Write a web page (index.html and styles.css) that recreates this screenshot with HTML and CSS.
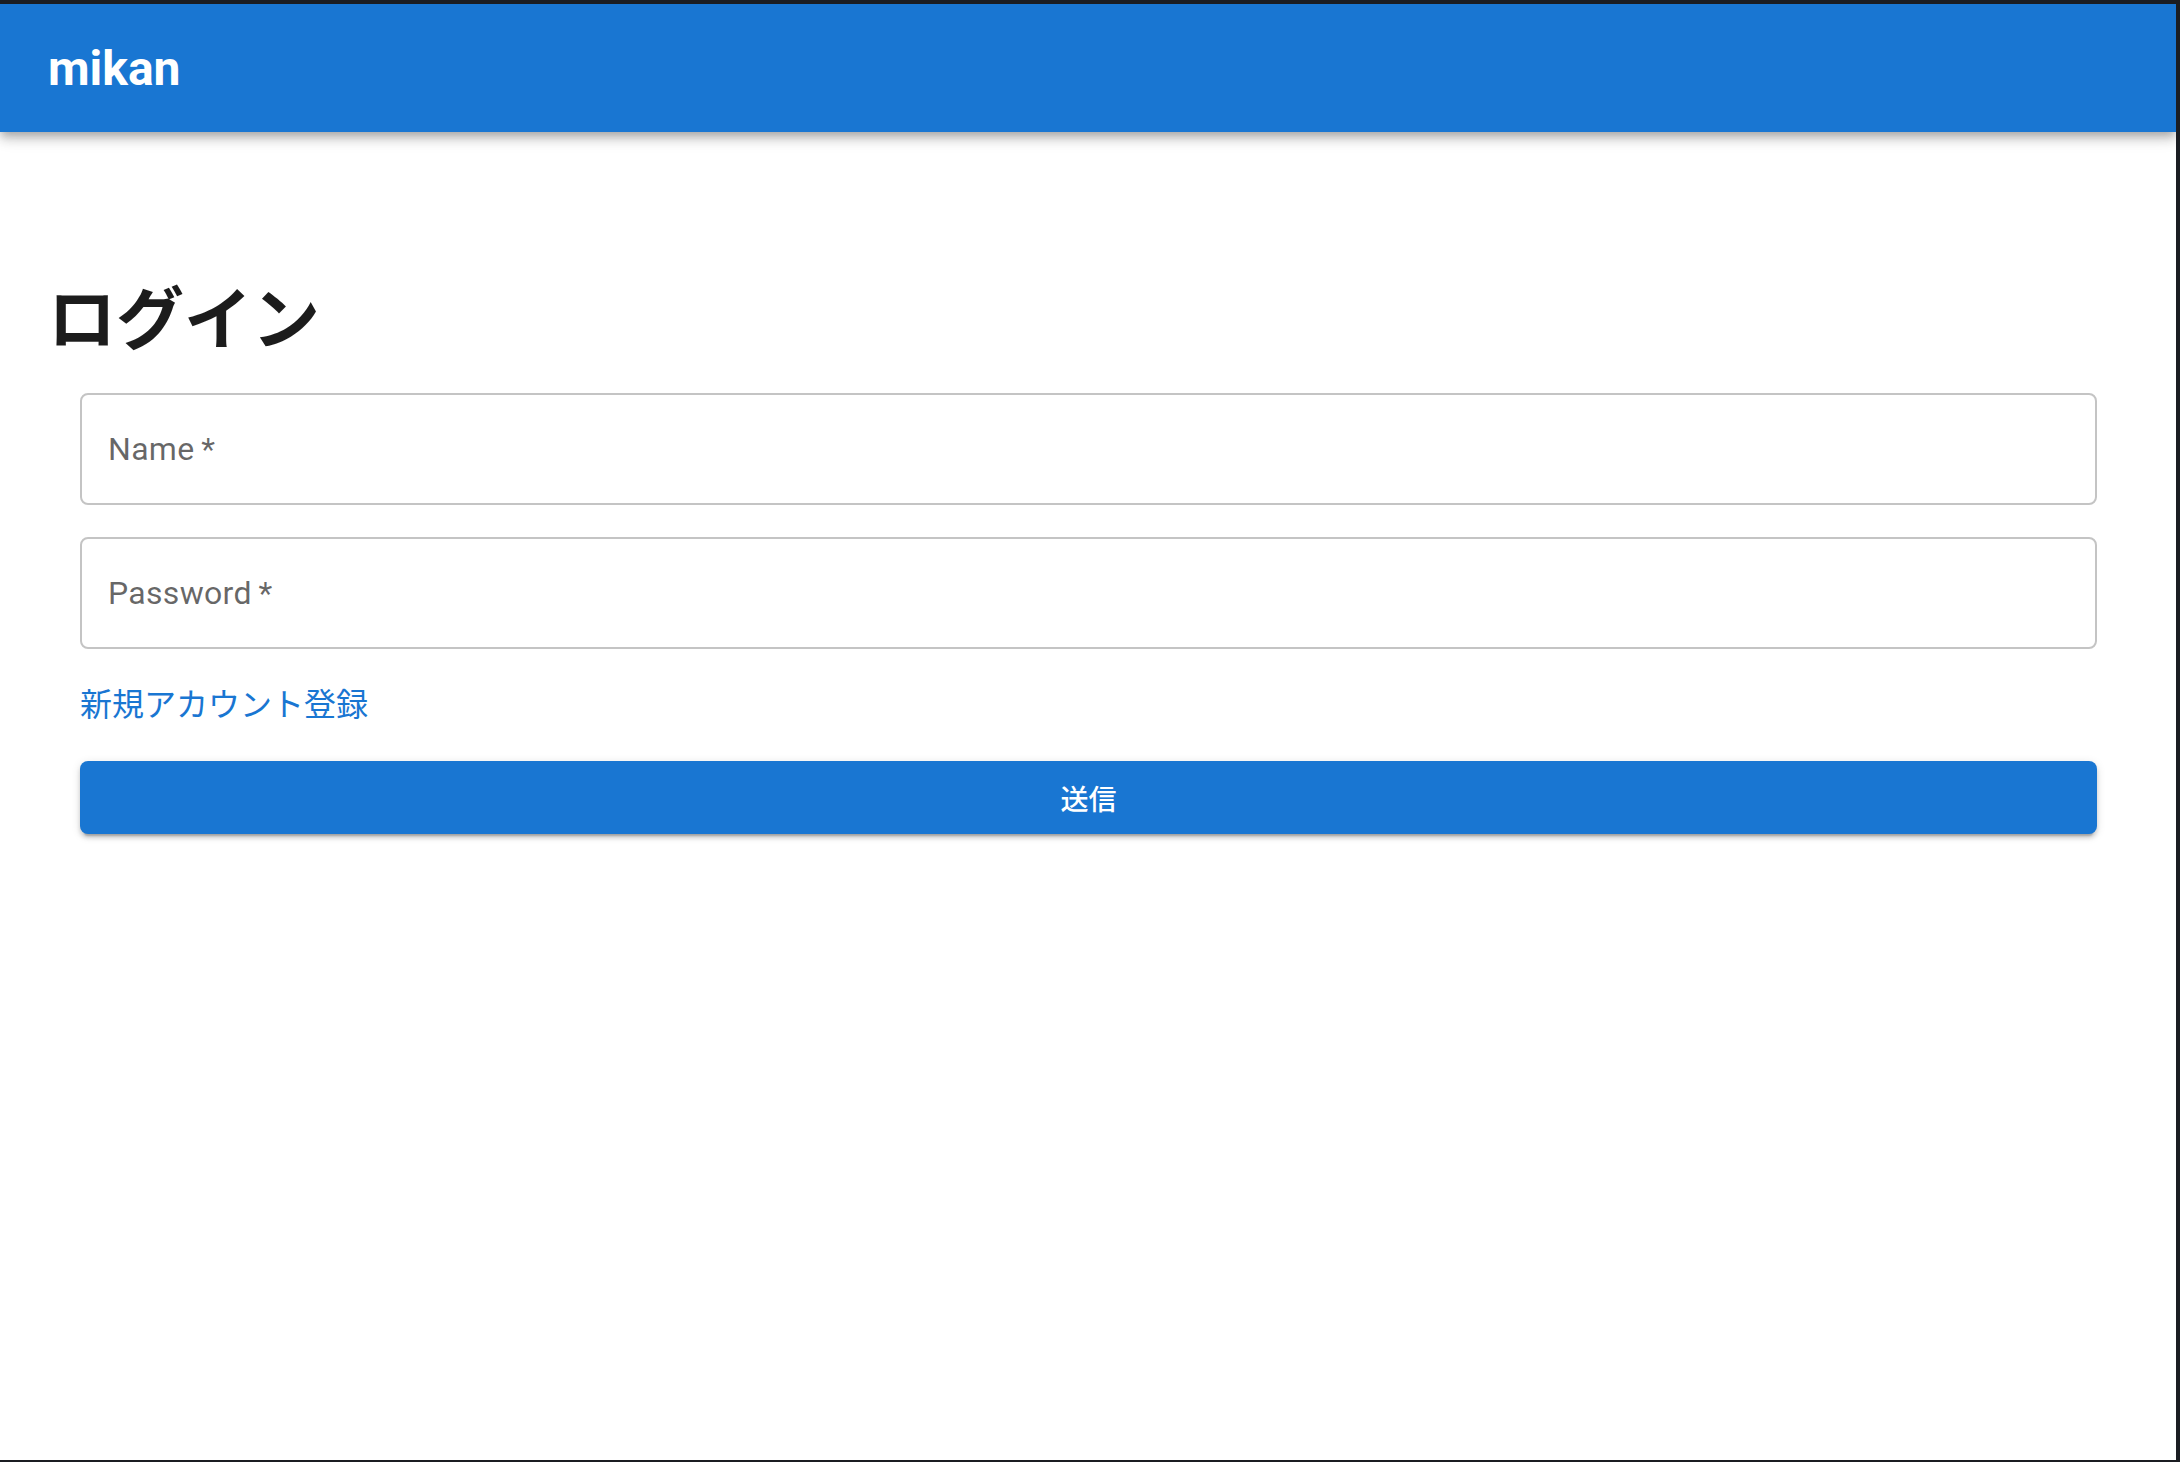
FILE: index.html
```html
<!DOCTYPE html>
<html lang="ja">
<head>
<meta charset="utf-8">
<title>mikan</title>
<link rel="stylesheet" href="styles.css">
</head>
<body>
<div class="screen">
  <header class="appbar">
    <div class="brand">mikan</div>
  </header>
  <main class="content">
    <h1 class="title">ログイン</h1>
    <form class="form">
      <label class="field"><span class="label">Name&thinsp;*</span></label>
      <label class="field"><span class="label">Password&thinsp;*</span></label>
      <a class="link" href="#">新規アカウント登録</a>
      <button class="submit" type="button">送信</button>
    </form>
  </main>
</div>
</body>
</html>
```
FILE: styles.css
```css
html, body {
  margin: 0;
  padding: 0;
}
body {
  background: #1b1d22;
  width: 2180px;
  height: 1462px;
  overflow: hidden;
}
.screen {
  margin: 4px 4px 2px 0;
  height: 1456px;
  background: #ffffff;
  display: flex;
  flex-direction: column;
  overflow: hidden;
}
.appbar {
  height: 128px;
  flex: none;
  background: #1976d2;
  display: flex;
  align-items: center;
  padding-left: 48px;
  box-shadow: 0 4px 8px -2px rgba(0,0,0,0.2), 0 8px 10px 0 rgba(0,0,0,0.14), 0 2px 20px 0 rgba(0,0,0,0.12);
  position: relative;
  z-index: 1;
}
.brand {
  font-family: Roboto, "Liberation Sans", sans-serif;
  font-weight: 700;
  font-size: 48px;
  color: #ffffff;
  line-height: 1.17;
  margin-top: 2px;
}
.content {
  padding: 0 48px;
  display: flex;
  flex-direction: column;
}
.title {
  margin: 142px 0 0 0;
  font-family: "Noto Sans CJK JP", "Noto Sans", sans-serif;
  font-weight: 700;
  font-size: 68px;
  line-height: 82px;
  color: #1c1c1c;
}
.form {
  margin: 37px 31px 0 32px;
  display: flex;
  flex-direction: column;
}
.field {
  height: 112px;
  box-sizing: border-box;
  border: 2px solid #c4c4c4;
  border-radius: 8px;
  display: flex;
  align-items: center;
  padding-left: 26px;
  margin-bottom: 32px;
}
.field:nth-child(2) {
  margin-bottom: 29px;
}
.label {
  font-family: Roboto, "Liberation Sans", sans-serif;
  font-size: 32px;
  color: rgba(0,0,0,0.6);
  letter-spacing: 0.3px;
}
.link {
  font-family: "Noto Sans CJK JP", "Noto Sans", sans-serif;
  font-size: 32px;
  line-height: 48px;
  color: #1976d2;
  text-decoration: none;
  align-self: flex-start;
}
.submit {
  margin-top: 35px;
  height: 73px;
  border: none;
  border-radius: 8px;
  background: #1976d2;
  color: #ffffff;
  font-family: "Noto Sans CJK JP", Roboto, sans-serif;
  font-size: 28px;
  font-weight: 500;
  box-shadow: 0 6px 2px -4px rgba(0,0,0,0.2), 0 4px 4px 0 rgba(0,0,0,0.14), 0 2px 10px 0 rgba(0,0,0,0.12);
  padding: 0;
}
```
